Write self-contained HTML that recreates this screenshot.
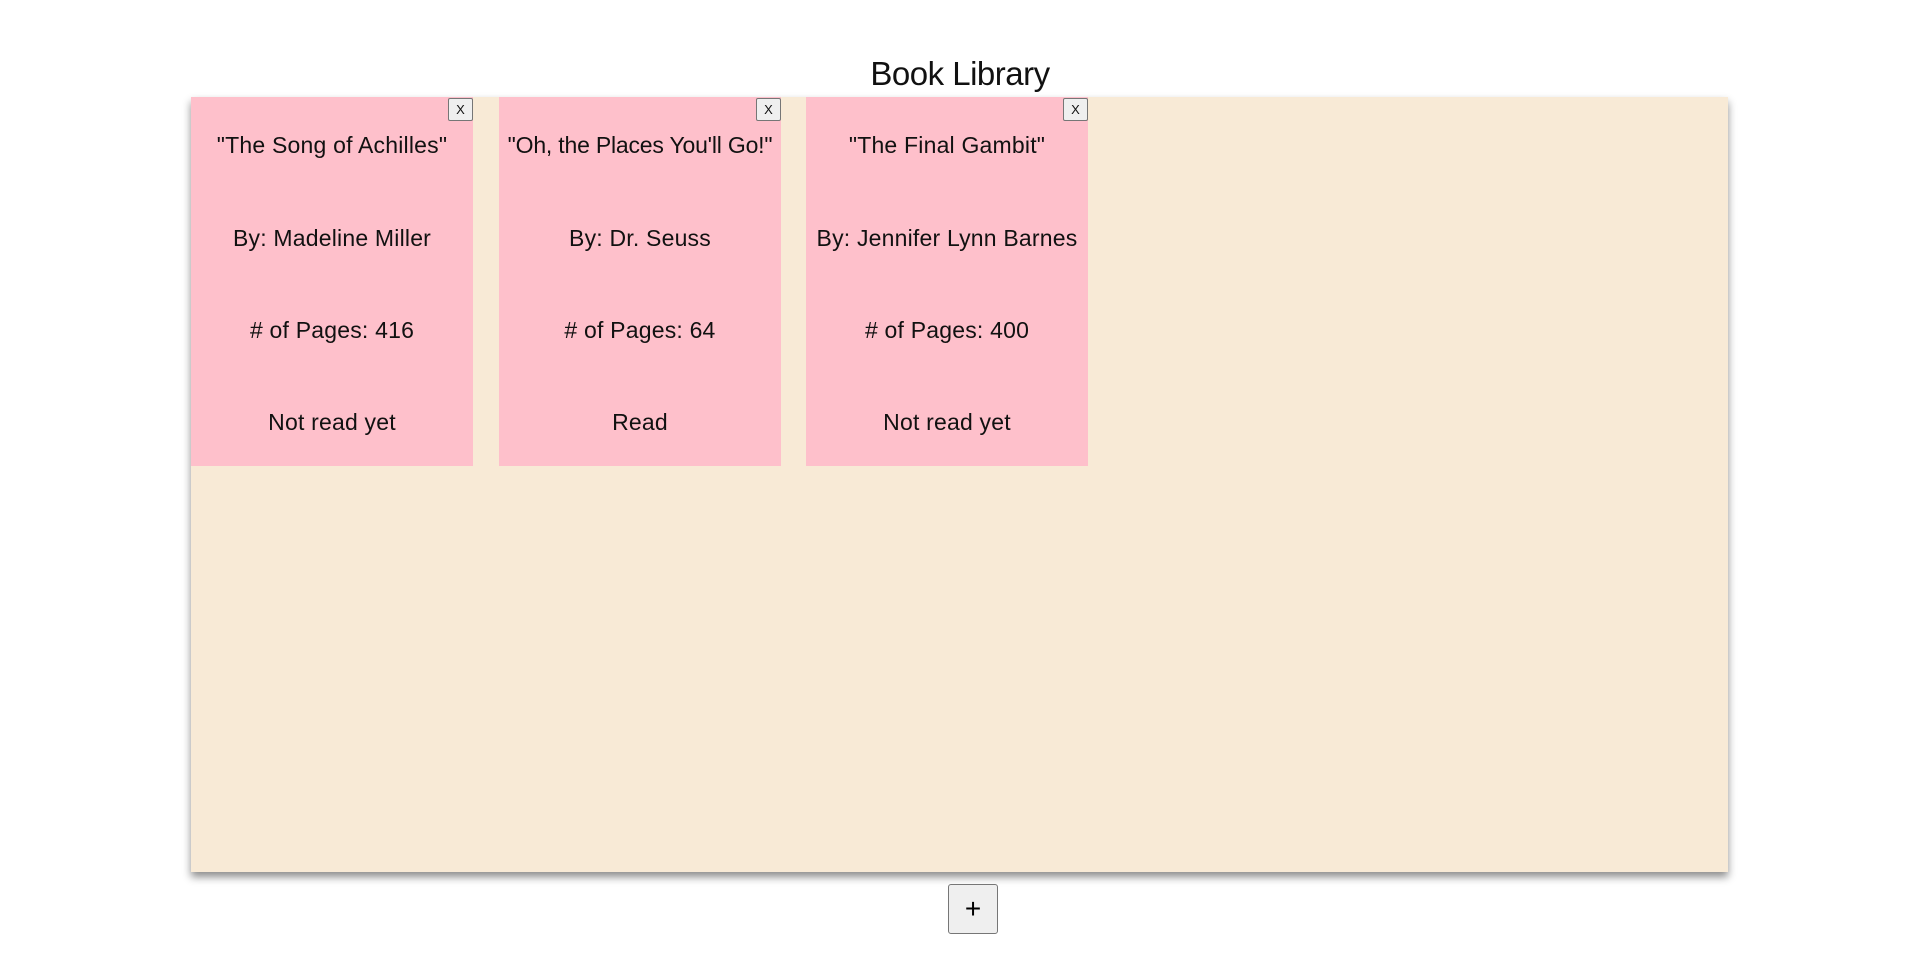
<!DOCTYPE html>
<html><head><meta charset="utf-8"><style>
body{margin:0;background:#fff;font-family:"Liberation Sans",sans-serif;width:1920px;height:969px;position:relative;overflow:hidden}
h1{position:absolute;top:55px;left:0;width:1920px;text-align:center;margin:0;font-weight:normal;font-size:33px;color:#111;letter-spacing:-0.5px}
.panel{position:absolute;left:191px;top:97px;width:1537px;height:775px;background:#f8ead6;box-shadow:0 5px 8px rgba(0,0,0,.45)}
.card{position:absolute;top:0;width:282px;height:369px;background:#fec0cb;color:#111;font-size:23px;letter-spacing:0.2px}
.card p{position:absolute;left:0;width:100%;text-align:center;margin:0;white-space:nowrap}
.x{position:absolute;right:0;top:1px;width:25px;height:23px;box-sizing:border-box;border:1px solid #767676;border-radius:2px;background:#efefef;font-size:13px;text-align:center;line-height:21px;letter-spacing:0}
.plus{position:absolute;left:948px;top:884px;width:50px;height:50px;box-sizing:border-box;border:1px solid #767676;border-radius:3px;background:#efefef;font-size:28px;text-align:center;line-height:48px}
</style></head><body>
<h1>Book Library</h1>
<div class="panel">
<div class="card" style="left:0"><div class="x">X</div><p style="top:35px">"The Song of Achilles"</p><p style="top:128px">By: Madeline Miller</p><p style="top:220px"># of Pages: 416</p><p style="top:312px">Not read yet</p></div>
<div class="card" style="left:308px"><div class="x">X</div><p style="top:35px;letter-spacing:-0.2px">"Oh, the Places You'll Go!"</p><p style="top:128px">By: Dr. Seuss</p><p style="top:220px"># of Pages: 64</p><p style="top:312px">Read</p></div>
<div class="card" style="left:615px"><div class="x">X</div><p style="top:35px">"The Final Gambit"</p><p style="top:128px">By: Jennifer Lynn Barnes</p><p style="top:220px"># of Pages: 400</p><p style="top:312px">Not read yet</p></div>
</div>
<div class="plus">+</div>
</body></html>
